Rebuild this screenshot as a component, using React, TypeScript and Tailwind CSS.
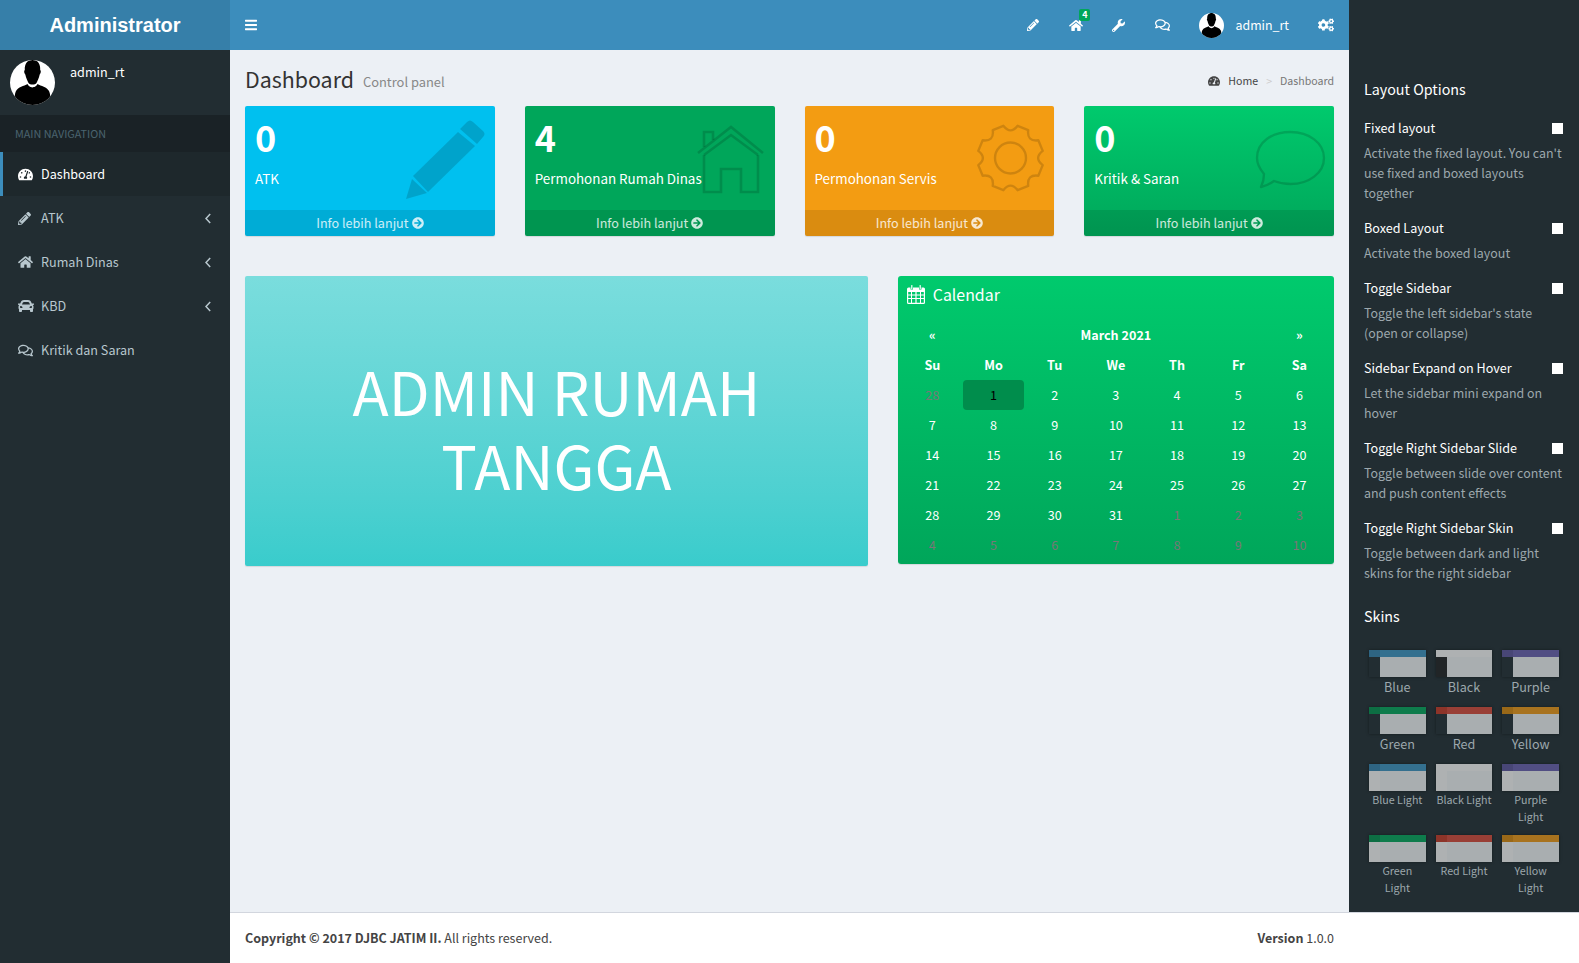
import React from "react";
import { FaTachometerAlt, FaPencilAlt, FaHome, FaCar, FaRegComments, FaBars, FaWrench, FaCogs, FaArrowCircleRight } from "react-icons/fa";

const Avatar = ({ size }: { size: number }) => (
  <svg width={size} height={size} viewBox="0 0 45 45" className="shrink-0">
    <defs>
      <clipPath id={`c${size}`}><circle cx="22.5" cy="22.5" r="22.5" /></clipPath>
    </defs>
    <circle cx="22.5" cy="22.5" r="22.5" fill="#fff" />
    <g clipPath={`url(#c${size})`} fill="#000">
      <path d="M22.5 0 C17 0 14.5 4 14.8 10 C13.8 10.5 14 13 15.3 14.5 C16 18 17.5 21 18.5 23 C20 25 25 25 26.5 23 C27.5 21 29 18 29.7 14.5 C31 13 31.2 10.5 30.2 10 C30.5 4 28 0 22.5 0 Z" />
      <path d="M17.5 24 C14 26 8 27 6 31 C4.5 34 4.5 38 5 45 L40 45 C40.5 38 40.5 34 39 31 C37 27 31 26 27.5 24 C26 27 24 27 22.5 27.5 C21 27 19 27 17.5 24 Z" />
    </g>
  </svg>
);

const PencilBig = () => (
  <svg width="80" height="80" viewBox="0 0 80 80" className="absolute left-[161px] top-[14px]" fill="#000" fillOpacity="0.15">
    <path d="M6 59 L21 73 L0 79 Z" />
    <path d="M7 56 L52 12 L69 26 L22 72 Z" />
    <path d="M54 9 L61 2 Q64 -1 67 2 L77 11 Q80 14 77 17 L71 24 Z" />
  </svg>
);

const HouseBig = () => (
  <svg width="90" height="90" viewBox="0 0 90 90" className="absolute left-[165px] top-[9px]" fill="none" stroke="#000" strokeOpacity="0.15" strokeWidth="2.6">
    <path d="M8 38 L41 12 L73 38" />
    <path d="M14 32 L14 17 L23 17 L23 25" />
    <path d="M14 40 L14 77 L31 77 L31 54 L51 54 L51 77 L68 77 L68 40" />
    <path d="M14 40 L41 20 L68 40" />
  </svg>
);

const gearPath = (() => {
  const cx = 45.5, cy = 43;
  const pt = (deg: number, r: number) => {
    const a = (deg * Math.PI) / 180;
    return `${(cx + r * Math.cos(a)).toFixed(2)} ${(cy + r * Math.sin(a)).toFixed(2)}`;
  };
  let d = "";
  for (let k = 0; k < 8; k++) {
    const a = 22.5 + 45 * k;
    d += `${k === 0 ? "M" : "L"}${pt(a - 10, 33)} L${pt(a + 10, 33)} Q${pt(a + 22.5, 23)} ${pt(a + 35, 33)} `;
  }
  return d + "Z";
})();

const GearBig = () => (
  <svg width="90" height="90" viewBox="0 0 90 90" className="absolute left-[160px] top-[9px]" fill="none" stroke="#000" strokeOpacity="0.15" strokeWidth="2.4">
    <path d={gearPath} strokeLinejoin="round" />
    <circle cx="45.5" cy="43" r="15.5" />
  </svg>
);

const ChatBig = () => (
  <svg width="90" height="90" viewBox="0 0 90 90" className="absolute left-[161px] top-[9px]" fill="none" stroke="#000" strokeOpacity="0.15" strokeWidth="2.4">
    <path d="M19 59 C14 53 12 48 12 43 C12 27 27 17 45.5 17 C64 17 79 28 79 43 C79 58 64 69 45.5 69 C39 69 34 68 29 66 C25 69 20 71 16 72 C18 68 19 64 19 59 Z" strokeLinejoin="round" />
  </svg>
);

const Chevron = () => (
  <svg width="6" height="11" viewBox="0 0 6 11" fill="none" stroke="currentColor" strokeWidth="1.5"><path d="M5.2 1 L1 5.5 L5.2 10" /></svg>
);

const CalendarIcon = () => (
  <svg width="18" height="19" viewBox="0 0 18 19" fill="#fff" className="shrink-0">
    <path fillRule="evenodd" d="M1.5 2.5 H3.5 V4.5 H6 V2.5 H12 V4.5 H14.5 V2.5 H16.5 A1.5 1.5 0 0 1 18 4 V17.5 A1.5 1.5 0 0 1 16.5 19 H1.5 A1.5 1.5 0 0 1 0 17.5 V4 A1.5 1.5 0 0 1 1.5 2.5 Z M1.2 7 V9.4 H4 V7 Z M5 7 V9.4 H8.4 V7 Z M9.6 7 V9.4 H13 V7 Z M14 7 V9.4 H16.8 V7 Z M1.2 10.4 V13 H4 V10.4 Z M5 10.4 V13 H8.4 V10.4 Z M9.6 10.4 V13 H13 V10.4 Z M14 10.4 V13 H16.8 V10.4 Z M1.2 14 V17.8 H4 V14 Z M5 14 V17.8 H8.4 V14 Z M9.6 14 V17.8 H13 V14 Z M14 14 V17.8 H16.8 V14 Z" />
    <rect x="4.2" y="0" width="1.2" height="4" rx="0.6" />
    <rect x="12.6" y="0" width="1.2" height="4" rx="0.6" />
  </svg>
);

const cards = [
  { n: "0", label: "ATK", bg: "bg-[#00c0ef]", icon: <PencilBig /> },
  { n: "4", label: "Permohonan Rumah Dinas", bg: "bg-[#00a65a]", icon: <HouseBig /> },
  { n: "0", label: "Permohonan Servis", bg: "bg-[#f39c12]", icon: <GearBig /> },
  { n: "0", label: "Kritik & Saran", bg: "bg-gradient-to-t from-[#00a65a] to-[#00ca6d]", icon: <ChatBig /> },
];

const menu = [
  { icon: <FaPencilAlt className="w-[13px] h-[13px]" />, label: "ATK", arrow: true },
  { icon: <FaHome className="w-[15px] h-[14px]" />, label: "Rumah Dinas", arrow: true },
  { icon: <FaCar className="w-[16px] h-[16px]" />, label: "KBD", arrow: true },
  { icon: <FaRegComments className="w-[15px] h-[15px]" />, label: "Kritik dan Saran", arrow: false },
];

const options = [
  { t: "Fixed layout", d: "Activate the fixed layout. You can't use fixed and boxed layouts together" },
  { t: "Boxed Layout", d: "Activate the boxed layout" },
  { t: "Toggle Sidebar", d: "Toggle the left sidebar's state (open or collapse)" },
  { t: "Sidebar Expand on Hover", d: "Let the sidebar mini expand on hover" },
  { t: "Toggle Right Sidebar Slide", d: "Toggle between slide over content and push content effects" },
  { t: "Toggle Right Sidebar Skin", d: "Toggle between dark and light skins for the right sidebar" },
];

const skins = [
  { name: "Blue", top: "bg-[#34708f]", corner: "bg-[#2e6482]", side: "bg-[#222d32]" },
  { name: "Black", top: "bg-[#aeb1b2]", corner: "bg-[#aeb1b2]", side: "bg-[#212527]" },
  { name: "Purple", top: "bg-[#514e83]", corner: "bg-[#484676]", side: "bg-[#222d32]" },
  { name: "Green", top: "bg-[#0e7c4c]", corner: "bg-[#0d6e43]", side: "bg-[#222d32]" },
  { name: "Red", top: "bg-[#993f36]", corner: "bg-[#8d3429]", side: "bg-[#222d32]" },
  { name: "Yellow", top: "bg-[#a8731f]", corner: "bg-[#996818]", side: "bg-[#222d32]" },
  { name: "Blue Light", top: "bg-[#34708f]", corner: "bg-[#2e6482]", side: "bg-[#aeb1b2]", small: true },
  { name: "Black Light", top: "bg-[#aeb1b2]", corner: "bg-[#aeb1b2]", side: "bg-[#aeb1b2]", small: true },
  { name: "Purple Light", top: "bg-[#514e83]", corner: "bg-[#484676]", side: "bg-[#aeb1b2]", small: true },
  { name: "Green Light", top: "bg-[#0e7c4c]", corner: "bg-[#0d6e43]", side: "bg-[#aeb1b2]", small: true },
  { name: "Red Light", top: "bg-[#993f36]", corner: "bg-[#8d3429]", side: "bg-[#aeb1b2]", small: true },
  { name: "Yellow Light", top: "bg-[#a8731f]", corner: "bg-[#996818]", side: "bg-[#aeb1b2]", small: true },
];

const weeks: [string, boolean][][] = [
  [["28", true], ["1", false], ["2", false], ["3", false], ["4", false], ["5", false], ["6", false]],
  [["7", false], ["8", false], ["9", false], ["10", false], ["11", false], ["12", false], ["13", false]],
  [["14", false], ["15", false], ["16", false], ["17", false], ["18", false], ["19", false], ["20", false]],
  [["21", false], ["22", false], ["23", false], ["24", false], ["25", false], ["26", false], ["27", false]],
  [["28", false], ["29", false], ["30", false], ["31", false], ["1", true], ["2", true], ["3", true]],
  [["4", true], ["5", true], ["6", true], ["7", true], ["8", true], ["9", true], ["10", true]],
];

export default function App() {
  return (
    <div className="flex w-[1579px] h-[963px] overflow-hidden bg-[#ecf0f5] text-[12.6px] leading-[20px] text-[#333] font-['Noto_Sans_CJK_SC',sans-serif]">
      {/* left sidebar */}
      <aside className="w-[230px] shrink-0 flex flex-col bg-[#222d32]">
        <div className="h-[50px] bg-[#367fa9] text-white text-[20px] leading-[50px] font-bold text-center font-['Liberation_Sans',sans-serif]">Administrator</div>
        <div className="h-[65px] flex pl-[10px] pt-[10px] text-white">
          <Avatar size={45} />
          <span className="ml-[15px] mt-[2px] leading-[20px]">admin_rt</span>
        </div>
        <div className="h-[37px] bg-[#1a2226] text-[#4b646f] text-[10.8px] leading-[37px] pl-[15px]">MAIN NAVIGATION</div>
        <div className="h-[44px] flex items-center bg-[#1e282c] border-l-[3px] border-[#3c8dbc] text-white pl-[15px]">
          <FaTachometerAlt className="w-[15px] h-[15px]" />
          <span className="ml-[8px]">Dashboard</span>
        </div>
        {menu.map((m) => (
          <div key={m.label} className="h-[44px] flex items-center text-[#b8c7ce] pl-[18px] pr-[19px]">
            <span className="w-[23px] flex">{m.icon}</span>
            <span className="flex-1">{m.label}</span>
            {m.arrow && <Chevron />}
          </div>
        ))}
      </aside>

      <div className="flex-1 min-w-0 flex flex-col">
        <div className="flex-1 min-h-0 flex">
          <div className="flex-1 min-w-0 flex flex-col">
            {/* top bar */}
            <header className="h-[50px] shrink-0 bg-[#3c8dbc] flex items-center text-white pl-[15px] pr-[15px]">
              <FaBars className="w-[12px] h-[14px]" />
              <div className="flex-1" />
              <FaPencilAlt className="w-[12px] h-[12px]" />
              <span className="relative ml-[30px]">
                <FaHome className="w-[14px] h-[13px]" />
                <span className="absolute left-[10px] top-[-10px] w-[11px] h-[12px] rounded-[2px] bg-[#00a65a] text-[9px] leading-[12px] font-bold text-center">4</span>
              </span>
              <FaWrench className="ml-[29px] w-[13px] h-[13px]" />
              <FaRegComments className="ml-[30px] w-[15px] h-[14px]" />
              <span className="ml-[29px] flex"><Avatar size={25} /></span>
              <span className="ml-[11px] text-[12.4px]">admin_rt</span>
              <FaCogs className="ml-[29px] w-[16px] h-[14px]" />
            </header>

            <main className="flex-1 min-h-0 px-[15px]">
              <div className="h-[56px] flex items-start pt-[15px]">
                <span className="text-[21.4px] leading-[28px] text-[#333]">Dashboard</span>
                <span className="ml-[9px] mt-[7px] text-[12.9px] leading-[20px] text-[#888]">Control panel</span>
                <div className="flex-1" />
                <div className="flex items-center mt-[7px] text-[10.6px] leading-[17px] text-[#444]">
                  <FaTachometerAlt className="w-[12px] h-[12px]" />
                  <span className="ml-[8px]">Home</span>
                  <span className="mx-[8px] text-[#ccc]">&gt;</span>
                  <span className="text-[#777]">Dashboard</span>
                </div>
              </div>

              <div className="grid grid-cols-4 gap-[30px]">
                {cards.map((c) => (
                  <div key={c.label} className={`relative h-[130px] rounded-[2px] shadow-[0_1px_1px_rgba(0,0,0,0.1)] text-white overflow-hidden flex flex-col ${c.bg}`}>
                    {c.icon}
                    <div className="relative flex-1 px-[10px] pt-[7px]">
                      <div className="text-[36px] leading-[46px] font-bold">{c.n}</div>
                      <div className="mt-[8px] text-[13.4px] leading-[22px] whitespace-nowrap">{c.label}</div>
                    </div>
                    <div className="relative h-[26px] bg-black/10 text-white/80 flex items-center justify-center gap-[3px]">
                      <span>Info lebih lanjut</span>
                      <FaArrowCircleRight className="w-[12px] h-[12px]" />
                    </div>
                  </div>
                ))}
              </div>

              <div className="flex items-start gap-[30px] mt-[40px]">
                <div className="w-[622.75px] h-[290px] rounded-[2px] bg-gradient-to-t from-[#39cccc] to-[#7adddd] shadow-[0_1px_1px_rgba(0,0,0,0.1)] text-white text-[59.5px] leading-[74px] text-center flex items-center justify-center px-[60px] pt-[12px]">
                  ADMIN RUMAH TANGGA
                </div>
                <div className="flex-1 min-w-0 h-[288px] rounded-[3px] bg-gradient-to-t from-[#00a65a] to-[#00ca6d] shadow-[0_1px_1px_rgba(0,0,0,0.1)] text-white">
                  <div className="h-[44px] flex items-start pt-[9px] pl-[9px]">
                    <CalendarIcon />
                    <span className="ml-[8px] text-[15.9px] leading-[20px]">Calendar</span>
                  </div>
                  <div className="px-[4px]">
                    <div className="grid grid-cols-7 h-[30px] items-center text-center font-bold">
                      <span>«</span>
                      <span className="col-span-5">March 2021</span>
                      <span>»</span>
                    </div>
                    <div className="grid grid-cols-7 h-[30px] items-center text-center font-bold">
                      {["Su", "Mo", "Tu", "We", "Th", "Fr", "Sa"].map((d) => <span key={d}>{d}</span>)}
                    </div>
                    {weeks.map((w, i) => (
                      <div key={i} className="grid grid-cols-7 h-[30px] text-center">
                        {w.map(([d, muted], j) => {
                          const sel = i === 0 && j === 1;
                          return (
                            <span key={j} className={`h-[30px] leading-[30px] rounded-[4px] ${sel ? "bg-[#008d4c] text-black" : muted ? "text-[#777]" : "text-white"}`}>{d}</span>
                          );
                        })}
                      </div>
                    ))}
                  </div>
                </div>
              </div>
            </main>
          </div>

          {/* right sidebar */}
          <aside className="w-[230px] shrink-0 bg-[#222d32] px-[15px] pt-[79px] text-[#9da8ad]">
            <h4 className="text-[14.3px] leading-[20px] text-white mb-[19px]">Layout Options</h4>
            {options.map((o) => (
              <div key={o.t} className="mb-[15px]">
                <div className="flex items-center justify-between h-[20px] mb-[5px] pr-[1px] text-white">
                  <span>{o.t}</span>
                  <span className="w-[11px] h-[11px] bg-white" />
                </div>
                <p className="text-[12.45px]">{o.d}</p>
              </div>
            ))}
            <h4 className="text-[14.3px] leading-[20px] text-white mt-[23px] mb-[19px]">Skins</h4>
            <div className="grid grid-cols-3">
              {skins.map((s) => (
                <div key={s.name} className="p-[5px] text-center">
                  <div className="h-[27px] flex flex-col shadow-[0_0_3px_rgba(0,0,0,0.4)]">
                    <div className={`h-[7px] flex ${s.top}`}><span className={`w-[11px] ${s.corner}`} /></div>
                    <div className="flex-1 flex bg-[#a9aeb0]"><span className={`w-[11px] ${s.side}`} /></div>
                  </div>
                  <p className={s.small ? "text-[10.7px] leading-[17px]" : "leading-[20px]"}>{s.name}</p>
                </div>
              ))}
            </div>
          </aside>
        </div>

        <footer className="h-[51px] shrink-0 bg-white border-t border-[#d2d6de] flex items-center justify-between pl-[15px] pr-[245px] text-[12.5px] text-[#444]">
          <span><b>Copyright © 2017 DJBC JATIM II.</b> All rights reserved.</span>
          <span><b>Version</b> 1.0.0</span>
        </footer>
      </div>
    </div>
  );
}
